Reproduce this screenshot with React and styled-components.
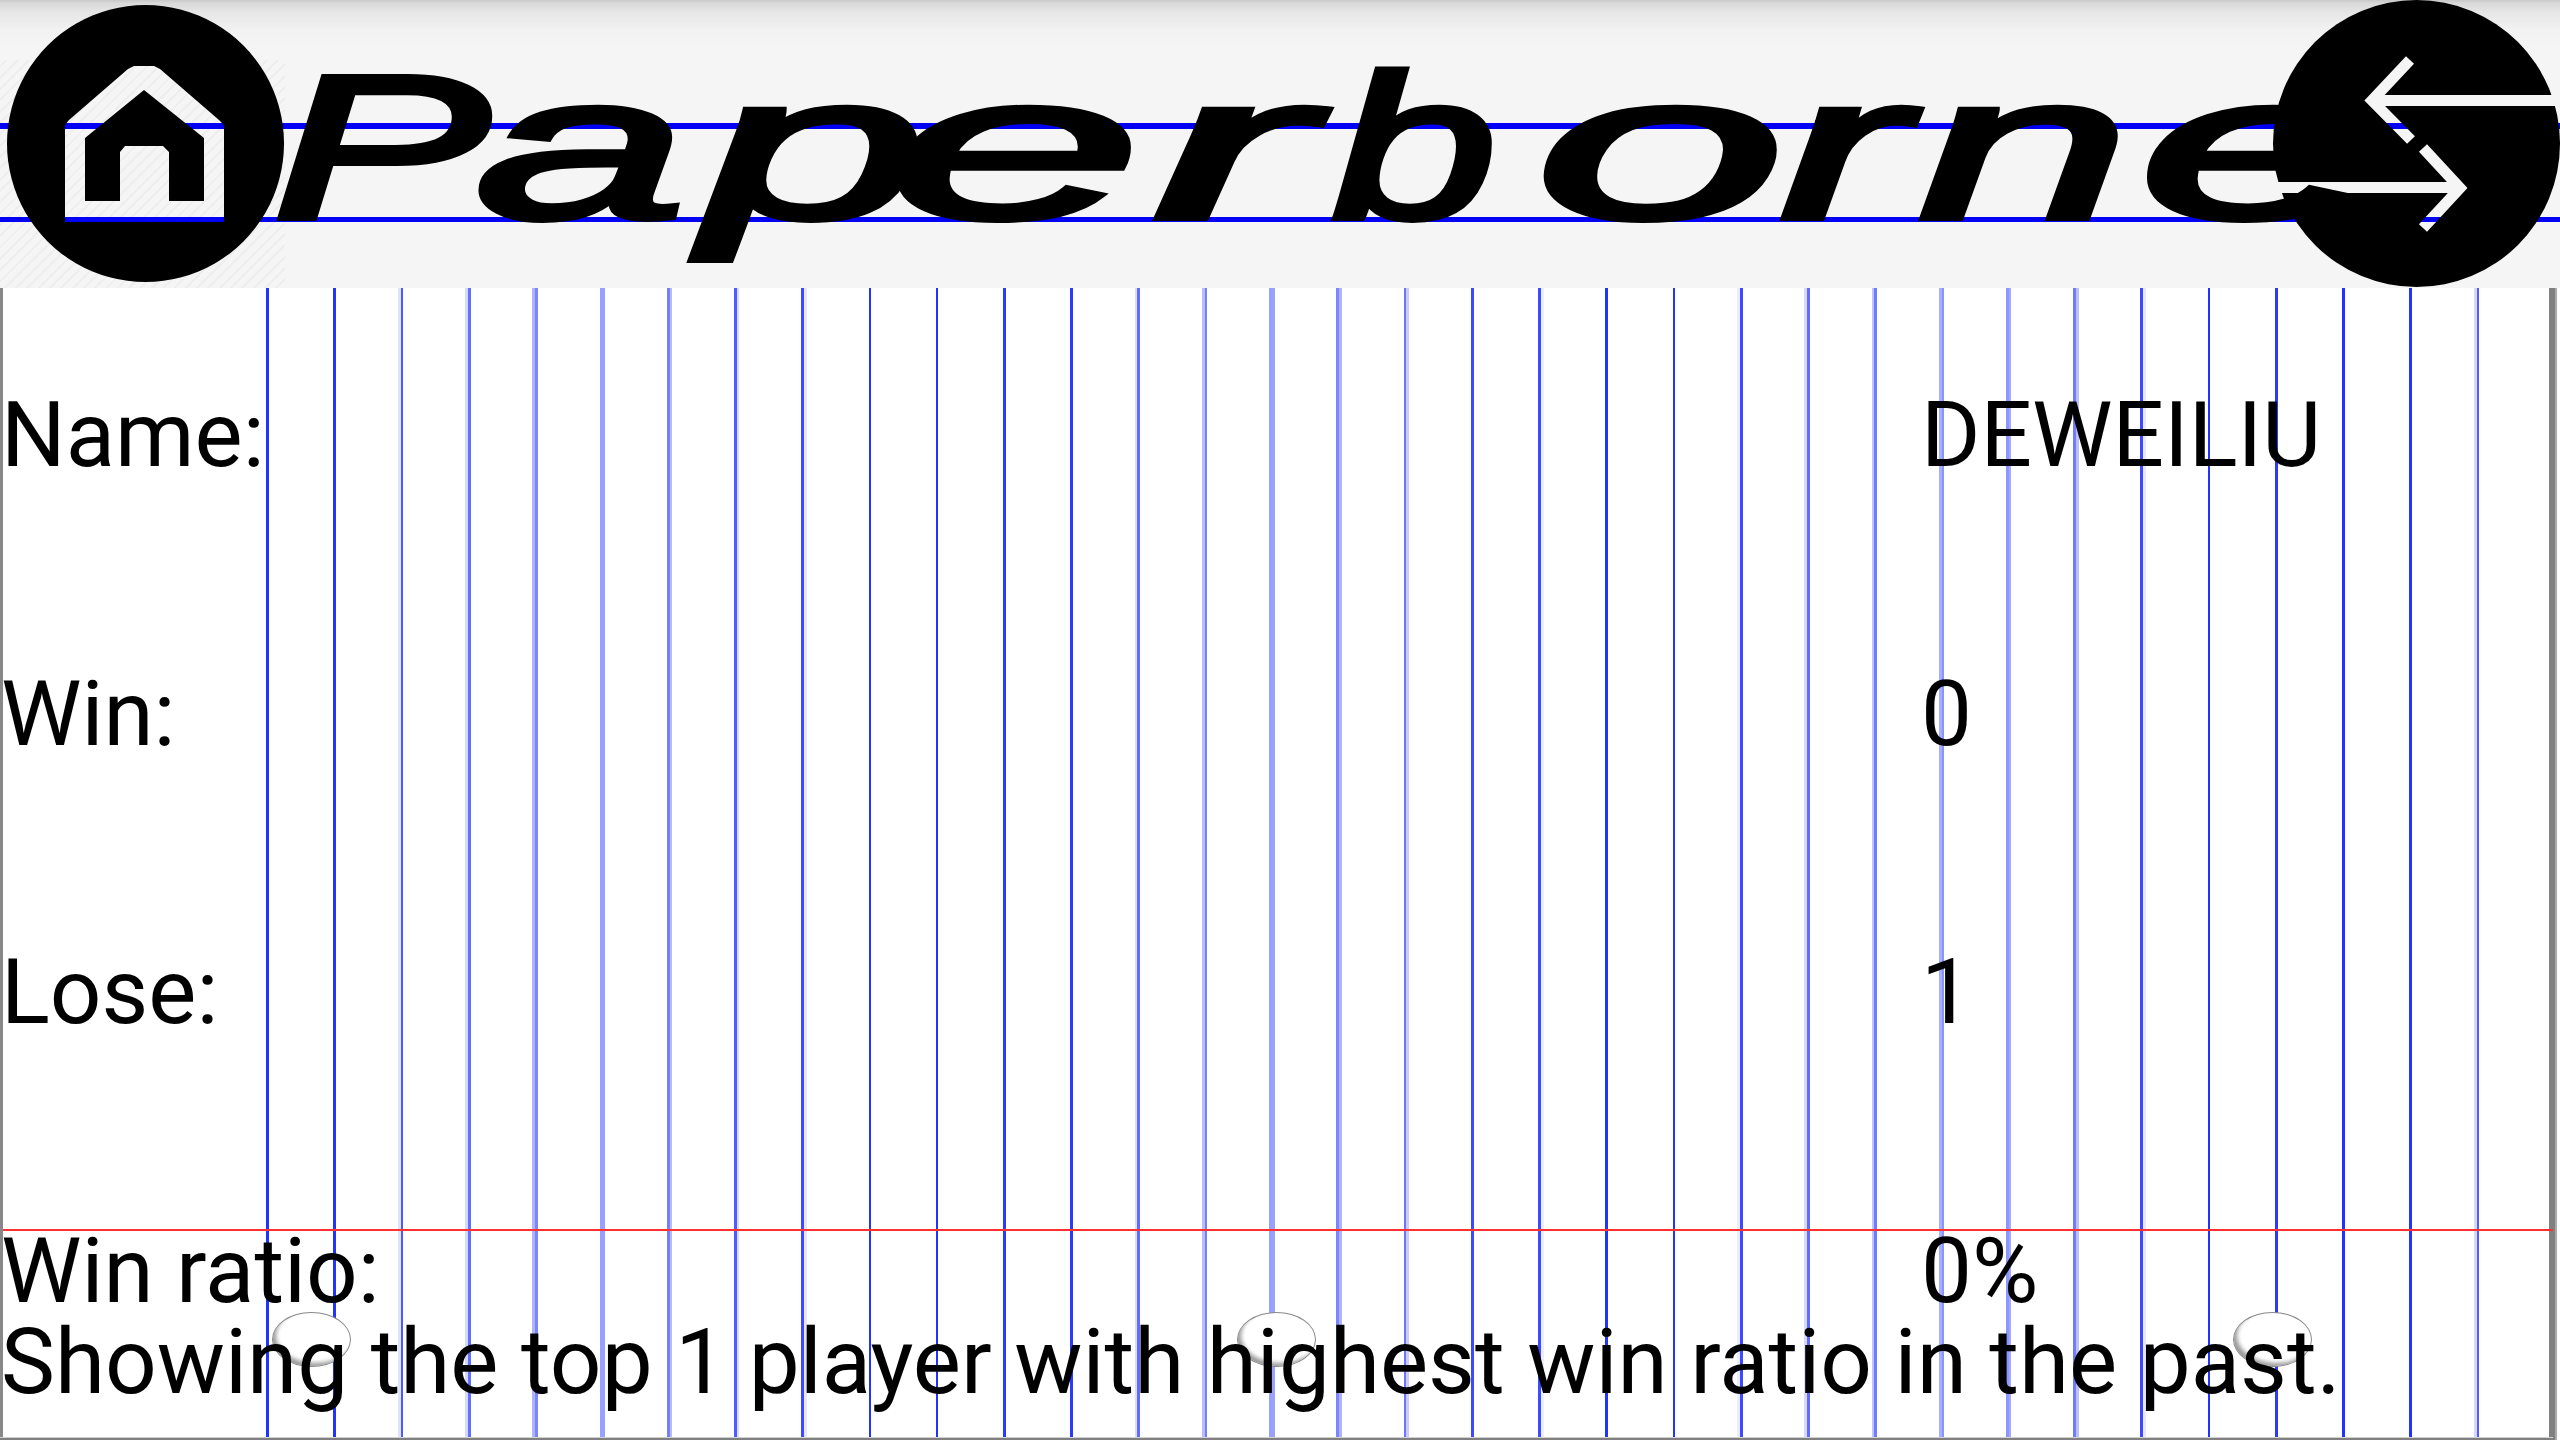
import React from "react";
import styled, { createGlobalStyle } from "styled-components";

const GlobalStyle = createGlobalStyle`
  html, body { margin: 0; padding: 0; background: #fff; }
`;

const B = "#2233ff";
/* Each rule of the ruled sheet: [first pixel, width, colour]. The uneven tints are resampling beat in the source. */
const rules = [
  [0, 3, "#888888"],
  [266, 3, B], [333, 3, B],
  [398, 3, "#e0e0ff"], [401, 2, "#4a5aff"],
  [465, 3, "#d8d8ff"], [468, 3, "#6070ff"],
  [532, 3, "#b0b4ff"], [535, 3, "#7a86ff"],
  [600, 5, "#99a0ff"],
  [667, 3, "#7480ff"], [670, 2, "#b8bcff"],
  [734, 3, "#4f5cff"], [737, 2, "#dcdcff"],
  [801, 3, "#3d4aff"], [804, 3, "#e4e4ff"],
  [869, 2, B], [936, 2, B],
  [1003, 3, "#2a3aff"], [1070, 3, "#2a3aff"],
  [1135, 2, "#dcdcff"], [1137, 3, "#5f6cff"],
  [1202, 3, "#b8bcff"], [1205, 2, "#7280ff"],
  [1269, 3, "#99a0ff"], [1272, 3, "#9aa2ff"],
  [1336, 3, "#7a86ff"], [1339, 3, "#b0b4ff"],
  [1404, 2, "#6a76ff"], [1406, 3, "#ccccff"],
  [1471, 3, "#3d4aff"],
  [1538, 3, "#3d4aff"], [1541, 3, "#ecedff"],
  [1605, 3, B], [1673, 2, B],
  [1737, 3, "#ecedff"], [1740, 3, "#3d4aff"],
  [1804, 3, "#d8d8ff"], [1807, 3, "#5f6cff"],
  [1872, 2, "#c0c4ff"], [1874, 3, "#6f7cff"],
  [1939, 3, "#a8aeff"], [1942, 2, "#8a94ff"],
  [2006, 3, "#8c96ff"], [2009, 2, "#a4aaff"],
  [2073, 3, "#6f7cff"], [2076, 3, "#bcc0ff"],
  [2140, 3, "#3d4aff"], [2143, 3, "#e8e8ff"],
  [2208, 2, B], [2275, 3, "#2a3aff"],
  [2342, 3, B], [2409, 3, B],
  [2474, 3, "#d8d8ff"], [2477, 2, "#5060ff"],
  [2549, 6, "#808080"], [2555, 2, "#aaaaaa"],
];

const ruleStops = rules
  .reduce((stops, [x, w, c], i) => {
    const prevEnd = i === 0 ? 0 : rules[i - 1][0] + rules[i - 1][1];
    if (x > prevEnd) stops.push(`#fff ${prevEnd}px`, `#fff ${x}px`);
    stops.push(`${c} ${x}px`, `${c} ${x + w}px`);
    return stops;
  }, [])
  .concat("#fff 2557px", "#fff 2560px")
  .join(", ");

const Page = styled.div`
  width: 2560px;
  height: 1440px;
  display: flex;
  flex-direction: column;
  overflow: hidden;
  font-family: Roboto, "Liberation Sans", sans-serif;
  color: #000;
`;

const Header = styled.header`
  position: relative;
  flex: 0 0 288px;
  box-sizing: border-box;
  padding: 0 0 0 272px;
  display: flex;
  align-items: flex-start;
  overflow: hidden;
  background:
    linear-gradient(to bottom, #c8c8c8 0, #d8d8d8 3px, #e6e6e6 12px, #f2f2f2 30px, #f5f5f5 50px) 0 0 / 100% 60px no-repeat,
    linear-gradient(#0000f5, #0000f5) 0 30px / 100% 5px no-repeat,
    linear-gradient(#0000f5, #0000f5) 0 123px / 100% 6px no-repeat,
    linear-gradient(#0000f5, #0000f5) 0 217px / 100% 5px no-repeat,
    repeating-linear-gradient(135deg, #f5f5f5 0 6px, #eeeeee 6px 8px) 0 0 / 285px 100% no-repeat,
    #f5f5f5;
`;

const Logo = styled.h1`
  margin: 0;
  padding-top: 44px;
  display: flex;
  font: italic 400 205px/1 "Liberation Sans", sans-serif;
  -webkit-text-stroke: 6px #000;
  white-space: nowrap;
  transform: scaleX(1.85);
  transform-origin: left top;
`;

const LogoLetter = styled.span`
  flex: none;
  width: ${(p) => p.$w}px;
  transform: scaleX(${(p) => p.$sx});
  transform-origin: left top;
`;

const RoundButton = styled.svg`
  position: absolute;
  display: block;
  top: ${(p) => p.$top}px;
  ${(p) => p.$side}: ${(p) => p.$inset}px;
`;

const Sheet = styled.main`
  position: relative;
  flex: 1;
  box-sizing: border-box;
  padding: 101px 0 0 1px;
  background:
    linear-gradient(#ff3030, #ff3030) 3px 941px / 2550px 2px no-repeat,
    linear-gradient(#808080, #808080) 0 100% / 2553px 2px no-repeat,
    linear-gradient(#d0d0d0, #d0d0d0) 0 calc(100% - 2px) / 2553px 1px no-repeat,
    linear-gradient(to right, ${ruleStops});
`;

const BeadRow = styled.div`
  position: absolute;
  top: 1024px;
  left: 272px;
  display: flex;
`;

const Bead = styled.span`
  flex: none;
  margin-left: ${(p) => p.$gap}px;
  width: 79px;
  height: 55px;
  box-sizing: border-box;
  border-radius: 50%;
  border: 1.5px solid #8a8a8a;
  background: #fff;
  box-shadow: inset 4px -4px 4px -1px #9a9a9a;
`;

const Stats = styled.dl`
  position: relative;
  margin: 0 0 -1px;
  display: grid;
  grid-template-columns: 1920px 1fr;
  grid-auto-rows: 92px;
  row-gap: 186.5px;
`;

const Label = styled.dt`
  margin: 0;
  font-size: 90.7px;
  line-height: 92px;
`;

const Value = styled.dd`
  margin: 0;
  font-size: 90.7px;
  line-height: 92px;
`;

const Caption = styled.p`
  position: relative;
  margin: 0;
  font-size: 90.8px;
  line-height: 92px;
  white-space: nowrap;
`;

const stats = [
  ["Name:", "DEWEILIU"],
  ["Win:", "0"],
  ["Lose:", "1"],
  ["Win ratio:", "0%"],
];

/* letter, advance, horizontal stretch: the wordmark is hand-lettered, so each glyph is fitted on its own */
const logoLetters = [
  ["P", 110, 0.86], ["a", 123, 1.0], ["p", 100, 1.05], ["e", 143, 1.2], ["r", 97, 1.25],
  ["b", 110, 0.78], ["o", 132, 1.18], ["r", 75, 1.0], ["n", 119, 1.0], ["e", 135, 1.15],
];

function HomeButton() {
  return (
    <RoundButton $side="left" $inset={7} $top={5} width="277" height="277" viewBox="7 5 277 277">
      <path
        fillRule="evenodd"
        fill="#000"
        d="M145.5 5a138.5 138.5 0 1 0 .01 0Z
           M134 66h20l6 3 59 51 5 5v97H65V125l4-5 59-51Z
           M144 90 85 138v63h35v-49l5-6h38l6 6v49h35v-63Z"
      />
    </RoundButton>
  );
}

function SwapButton() {
  return (
    <RoundButton $side="right" $inset={0} $top={0} width="287" height="287" viewBox="2273 0 287 287">
      <mask id="swap-cut" maskUnits="userSpaceOnUse" x="2273" y="0" width="287" height="287">
        <rect x="2273" y="0" width="287" height="287" fill="#fff" />
        <g fill="none" stroke="#000" strokeWidth="11" strokeMiterlimit="10">
          <path d="M2410 60 2372 100.500 2411 140" />
          <path d="M2372 100.500H2560" />
          <path d="M2423 148 2460 188 2423 228" />
          <path d="M2273 187.500H2460" />
        </g>
      </mask>
      <circle cx="2416.500" cy="143.500" r="143.500" fill="#000" mask="url(#swap-cut)" />
    </RoundButton>
  );
}

export default function App() {
  return (
    <Page>
      <GlobalStyle />
      <Header>
        <Logo>
          {logoLetters.map(([ch, w, sx], i) => (
            <LogoLetter key={i} $w={w} $sx={sx}>{ch}</LogoLetter>
          ))}
        </Logo>
        <HomeButton />
        <SwapButton />
      </Header>
      <Sheet>
        <BeadRow>
          <Bead $gap={0} />
          <Bead $gap={886} />
          <Bead $gap={917} />
        </BeadRow>
        <Stats>
          {stats.map(([label, value]) => (
            <React.Fragment key={label}>
              <Label>{label}</Label>
              <Value>{value}</Value>
            </React.Fragment>
          ))}
        </Stats>
        <Caption>Showing the top 1 player with highest win ratio in the past.</Caption>
      </Sheet>
    </Page>
  );
}
